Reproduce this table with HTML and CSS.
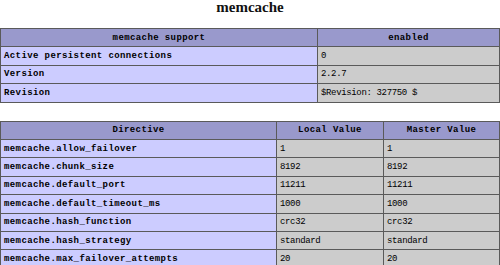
FILE: index.html
```html
<!DOCTYPE html>
<html>
<head>
<meta charset="utf-8">
<link rel="stylesheet" href="styles.css">
</head>
<body>
<h2 class="title">memcache</h2>
<table class="info t1">
  <colgroup><col class="c1a"><col></colgroup>
  <tr class="h"><th>memcache support</th><th>enabled</th></tr>
  <tr><td class="e">Active persistent connections</td><td class="v">0</td></tr>
  <tr><td class="e">Version</td><td class="v">2.2.7</td></tr>
  <tr><td class="e">Revision</td><td class="v">$Revision: 327750 $</td></tr>
</table>
<table class="info t2">
  <colgroup><col class="c2a"><col class="c2b"><col></colgroup>
  <tr class="h"><th>Directive</th><th>Local Value</th><th>Master Value</th></tr>
  <tr><td class="e">memcache.allow_failover</td><td class="v">1</td><td class="v">1</td></tr>
  <tr><td class="e">memcache.chunk_size</td><td class="v">8192</td><td class="v">8192</td></tr>
  <tr><td class="e">memcache.default_port</td><td class="v">11211</td><td class="v">11211</td></tr>
  <tr><td class="e">memcache.default_timeout_ms</td><td class="v">1000</td><td class="v">1000</td></tr>
  <tr><td class="e">memcache.hash_function</td><td class="v">crc32</td><td class="v">crc32</td></tr>
  <tr><td class="e">memcache.hash_strategy</td><td class="v">standard</td><td class="v">standard</td></tr>
  <tr><td class="e">memcache.max_failover_attempts</td><td class="v">20</td><td class="v">20</td></tr>
</table>
</body>
</html>
```
FILE: styles.css
```css
html, body {
  margin: 0;
  padding: 0;
  background: #ffffff;
}
.title {
  margin: 0;
  height: 28px;
  font-family: "Liberation Serif", serif;
  font-weight: bold;
  font-size: 15px;
  line-height: 15px;
  text-align: center;
  color: #111;
}
.info {
  width: 500px;
  border-collapse: collapse;
  table-layout: fixed;
  font-family: "Liberation Mono", monospace;
  font-size: 9px;
  color: #000;
}
.t2 {
  margin-top: 18px;
}
.c1a { width: 317px; }
.c2a { width: 276px; }
.c2b { width: 107px; }
.info tr {
  height: 18.4px;
}
.info th, .info td {
  border: 1px solid #5a5a5a;
  padding: 0 3px;
  vertical-align: middle;
  white-space: nowrap;
  overflow: hidden;
  line-height: 12px;
}
.h th {
  background: #9999cc;
  font-weight: bold;
  text-align: center;
  letter-spacing: 0.4px;
}
.e {
  background: #ccccff;
  font-weight: bold;
  text-align: left;
  letter-spacing: 0.4px;
}
.v {
  background: #cccccc;
  text-align: left;
  letter-spacing: -0.35px;
}
```
